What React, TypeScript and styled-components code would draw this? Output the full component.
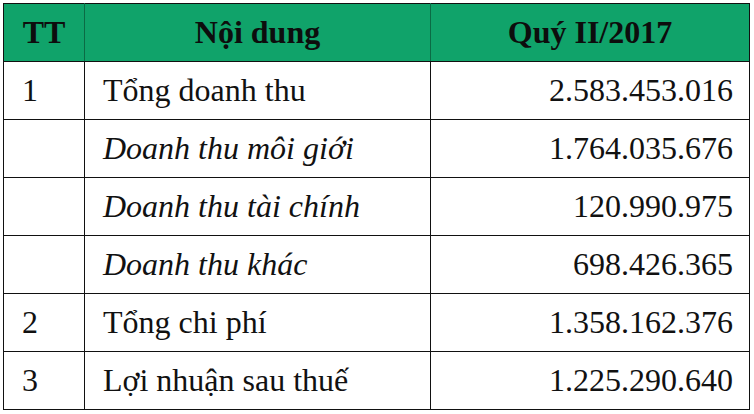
import React from "react"
import styled, { createGlobalStyle } from "styled-components"

const GlobalStyle = createGlobalStyle`
  html, body {
    margin: 0;
    padding: 0;
    background: #ffffff;
  }
  body {
    font-family: "Times New Roman", "Liberation Serif", "DejaVu Serif", serif;
    color: #111;
  }
`

const serif = `"Times New Roman", "Liberation Serif", "DejaVu Serif", serif`

const Page = styled.div`
  padding: 3px 0 0 3px;
`

const Table = styled.table`
  width: 746px;
  border-collapse: collapse;
  border: 1.5px solid #111;
  table-layout: fixed;
  font-family: ${serif};
`

const HeadCell = styled.th`
  height: 57px;
  padding: 0;
  background: #10a36a;
  font-family: ${serif};
  font-size: 32px;
  font-weight: bold;
  color: #0d0d0d;
  text-align: center;
  vertical-align: middle;
  border-bottom: 1.5px solid #111;
  border-left: 1px solid #0b6b45;
  &:first-child {
    border-left: none;
  }
`

const Row = styled.tr`
  height: 58px;
`

interface CellProps {
  $align?: "left" | "right"
  $italic?: boolean
}

const Cell = styled.td<CellProps>`
  padding: ${(p) => (p.$align === "right" ? "0 16px 0 0" : "0 0 0 18px")};
  font-family: ${serif};
  font-size: 32px;
  font-weight: 400;
  font-style: ${(p) => (p.$italic ? "italic" : "normal")};
  color: #111;
  text-align: ${(p) => p.$align || "left"};
  vertical-align: middle;
  border: 1.5px solid #111;
  white-space: nowrap;
`

interface Line {
  tt: string
  label: string
  value: string
  italic?: boolean
}

const lines: Line[] = [
  { tt: "1", label: "Tổng doanh thu", value: "2.583.453.016" },
  { tt: "", label: "Doanh thu môi giới", value: "1.764.035.676", italic: true },
  { tt: "", label: "Doanh thu tài chính", value: "120.990.975", italic: true },
  { tt: "", label: "Doanh thu khác", value: "698.426.365", italic: true },
  { tt: "2", label: "Tổng chi phí", value: "1.358.162.376" },
  { tt: "3", label: "Lợi nhuận sau thuế", value: "1.225.290.640" },
]

export default function App() {
  return (
    <>
      <GlobalStyle />
      <Page>
        <Table>
          <colgroup>
            <col style={{ width: 81 }} />
            <col style={{ width: 346 }} />
            <col style={{ width: 319 }} />
          </colgroup>
          <thead>
            <tr>
              <HeadCell>TT</HeadCell>
              <HeadCell>Nội dung</HeadCell>
              <HeadCell>Quý II/2017</HeadCell>
            </tr>
          </thead>
          <tbody>
            {lines.map((line, i) => (
              <Row key={i}>
                <Cell>{line.tt}</Cell>
                <Cell $italic={line.italic}>{line.label}</Cell>
                <Cell $align="right">{line.value}</Cell>
              </Row>
            ))}
          </tbody>
        </Table>
      </Page>
    </>
  )
}
